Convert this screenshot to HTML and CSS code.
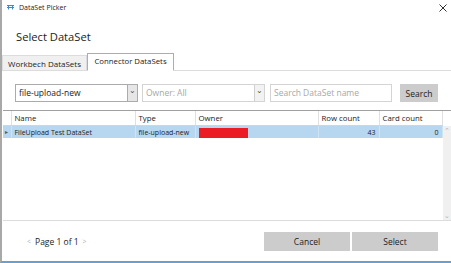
FILE: index.html
```html
<!DOCTYPE html>
<html>
<head>
    <meta charset="UTF-8">
    <title>DataSet Picker</title>
    <link rel="stylesheet" href="styles.css">
</head>
<body>
    <div class="window">
        <div class="titlebar">
            <svg class="app-icon" width="7" height="5" viewBox="0 0 7 5">
                <path d="M0 0.5H7M1.5 0.5V4.5M5.5 0.5V4.5M0 2.5H7" stroke="#3c8ad0" stroke-width="1" fill="none"/>
            </svg>
            <span class="title">DataSet Picker</span>
            <svg class="close" width="8" height="8" viewBox="0 0 8 8">
                <path d="M0.5 0.5L7.5 7.5M7.5 0.5L0.5 7.5" stroke="#333" stroke-width="1"/>
            </svg>
        </div>

        <h1 class="heading">Select DataSet</h1>

        <div class="tabs">
            <div class="tab">Workbech DataSets</div>
            <div class="tab active">Connector DataSets</div>
        </div>

        <div class="filters">
            <div class="combo">
                <span class="combo-text">file-upload-new</span>
                <span class="combo-btn">&#8964;</span>
            </div>
            <div class="combo disabled">
                <span class="combo-text">Owner: All</span>
                <span class="combo-btn">&#8964;</span>
            </div>
            <div class="search-box">Search DataSet name</div>
            <button class="btn search-btn">Search</button>
        </div>

        <div class="grid">
            <table class="grid-table">
                <colgroup>
                    <col class="c-head">
                    <col class="c-name">
                    <col class="c-type">
                    <col class="c-owner">
                    <col class="c-rows">
                    <col class="c-cards">
                </colgroup>
                <tr class="grid-head">
                    <th class="row-head"></th>
                    <th>Name</th>
                    <th>Type</th>
                    <th>Owner</th>
                    <th>Row count</th>
                    <th>Card count</th>
                </tr>
                <tr class="grid-row selected">
                    <td class="row-head">&#9656;</td>
                    <td>FileUpload Test DataSet</td>
                    <td>file-upload-new</td>
                    <td><span class="redacted"></span></td>
                    <td class="num">43</td>
                    <td class="num">0</td>
                </tr>
            </table>
            <div class="scrollbar">
                <span class="arrow">&#8963;</span>
                <span class="arrow">&#8964;</span>
            </div>
        </div>

        <div class="footer">
            <div class="pager">
                <span class="pager-arrow">&lt;</span>
                <span>Page 1 of 1</span>
                <span class="pager-arrow">&gt;</span>
            </div>
            <div class="actions">
                <button class="btn action-btn">Cancel</button>
                <button class="btn action-btn">Select</button>
            </div>
        </div>
    </div>
</body>
</html>
```

FILE: styles.css
```css
body {
    margin: 0;
    background-color: white;
    font-family: "Open Sans", "Noto Sans", sans-serif;
    color: #222;
}
.window {
    position: relative;
    width: 451px;
    height: 263px;
    box-sizing: border-box;
    border-left: 2px solid #a8a8a8;
    border-bottom: 2px solid #6b9fcf;
    overflow: hidden;
}
.titlebar {
    display: flex;
    align-items: center;
    height: 15px;
    padding-left: 5px;
    padding-right: 4px;
}
.app-icon {
    margin-right: 5px;
}
.title {
    font-size: 7px;
    flex: 1;
}
.heading {
    margin: 13px 0 0 14px;
    font-size: 11.2px;
    font-weight: normal;
    line-height: 17px;
    height: 17px;
}
.tabs {
    display: flex;
    align-items: flex-end;
    margin-top: 8px;
    height: 17px;
    border-bottom: 1px solid #dcdcdc;
}
.tab {
    width: 85px;
    font-size: 8px;
    text-align: center;
    white-space: nowrap;
    height: 15px;
    line-height: 15px;
    background-color: #f0f0f0;
    border: 1px solid #dcdcdc;
    border-bottom: none;
    box-sizing: border-box;
}
.tab.active {
    width: 87px;
    height: 18px;
    line-height: 15px;
    font-size: 7.8px;
    background-color: white;
    border: 1px solid #adadad;
    border-bottom: 1px solid white;
    margin-bottom: -1px;
}
.filters {
    display: flex;
    align-items: center;
    margin: 13px 0 0 13px;
    height: 18px;
}
.combo {
    display: flex;
    width: 123px;
    height: 18px;
    box-sizing: border-box;
    border: 1px solid #ababab;
    margin-right: 4px;
    font-size: 8.5px;
}
.combo-text {
    flex: 1;
    line-height: 16px;
    padding-left: 3px;
}
.combo-btn {
    width: 9px;
    background-color: #e6e6e6;
    border-left: 1px solid #ababab;
    font-size: 8px;
    line-height: 10px;
    text-align: center;
    color: #555;
}
.combo.disabled {
    border-color: #d4d4d4;
    color: #a8a8a8;
}
.combo.disabled .combo-btn {
    background-color: #f2f2f2;
    border-left-color: #cfcfcf;
}
.search-box {
    width: 122px;
    height: 18px;
    box-sizing: border-box;
    border: 1px solid #d4d4d4;
    color: #a8a8a8;
    font-size: 8.5px;
    line-height: 16px;
    padding-left: 3px;
    margin-left: 1px;
}
.btn {
    font-family: inherit;
    background-color: #cccccc;
    border: none;
    color: #222;
    padding: 0;
    font-size: 8.5px;
}
.search-btn {
    width: 38px;
    height: 18px;
    margin-left: 8px;
}
.grid {
    position: relative;
    margin: 8px 0 0 1px;
    height: 111px;
    box-sizing: border-box;
    border-top: 1px solid #a0a0a0;
    border-bottom: 1px solid #dcdcdc;
}
.grid-table {
    border-collapse: collapse;
    table-layout: fixed;
    width: 439px;
}
.c-head { width: 8px; }
.c-name { width: 124px; }
.c-type { width: 60px; }
.c-owner { width: 123px; }
.c-rows { width: 61px; }
.c-cards { width: 63px; }
.grid-table th, .grid-table td {
    height: 12px;
    padding: 0 3px;
    white-space: nowrap;
    overflow: hidden;
    text-align: left;
    font-weight: normal;
    font-size: 7px;
}
.grid-head th {
    height: 14px;
    border-right: 1px solid #e0e0e0;
    border-bottom: 1px solid #d4d4d4;
    font-size: 7.8px;
}
.grid-table .row-head {
    padding: 0;
    text-align: center;
}
.grid-row td.row-head {
    background-color: white;
    font-size: 6px;
    color: #555;
    border-right: 1px solid #e0e0e0;
}
.grid-row.selected td {
    background-color: #b7d6f0;
    border-right: 1px solid #cfe3f3;
}
.grid-row td.num {
    text-align: right;
}
.redacted {
    display: inline-block;
    width: 49px;
    height: 10px;
    background-color: #ec1c24;
    vertical-align: middle;
    margin-top: 2px;
}
.scrollbar {
    position: absolute;
    top: 15px;
    right: 0;
    bottom: 0;
    width: 8px;
    background-color: #f0f0f0;
    display: flex;
    flex-direction: column;
    justify-content: space-between;
    align-items: center;
    font-size: 7px;
    color: #b0b0b0;
}
.footer {
    display: flex;
    align-items: center;
    justify-content: space-between;
    margin-top: 11px;
    padding: 0 13px 0 25px;
    height: 19px;
}
.pager {
    display: flex;
    gap: 4px;
    font-size: 8.5px;
}
.pager-arrow {
    color: #b0b0b0;
    font-size: 7px;
    line-height: 12px;
}
.actions {
    display: flex;
    gap: 2px;
}
.action-btn {
    width: 86px;
    height: 19px;
}
```
